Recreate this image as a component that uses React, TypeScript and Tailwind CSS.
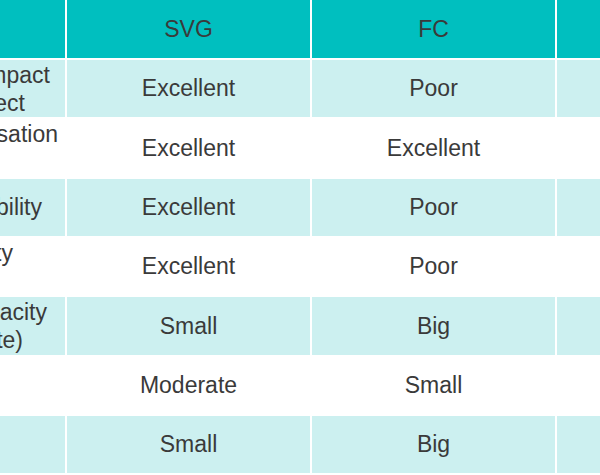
import React from "react";

type Line = { text: string; mr: number };
type Row = { first: Line[]; svg: string; fc: string };

const rows: Row[] = [
  { first: [{ text: "Visual Impact", mr: 15 }, { text: "Effect", mr: 40 }], svg: "Excellent", fc: "Poor" },
  { first: [{ text: "Customisation", mr: 7 }, { text: "", mr: 0 }], svg: "Excellent", fc: "Excellent" },
  { first: [{ text: "Scalability", mr: 23 }], svg: "Excellent", fc: "Poor" },
  { first: [{ text: "Quality", mr: 52 }, { text: "", mr: 0 }], svg: "Excellent", fc: "Poor" },
  { first: [{ text: "Storage capacity", mr: 18 }, { text: "(per site)", mr: 42 }], svg: "Small", fc: "Big" },
  { first: [], svg: "Moderate", fc: "Small" },
  { first: [], svg: "Small", fc: "Big" },
];

export default function App() {
  const font = { fontFamily: '"Liberation Sans", Arial, sans-serif' };
  return (
    <div className="w-[600px] h-[475px] bg-white overflow-hidden text-[#3a3a3a] text-[23px]" style={font}>
      <div className="grid grid-cols-[65px_243px_243px_1fr] grid-rows-[58px_repeat(7,57.33px)] gap-[2px]">
        <div className="bg-[#00bfbf]" />
        <div className="bg-[#00bfbf] flex items-center justify-center">SVG</div>
        <div className="bg-[#00bfbf] flex items-center justify-center">FC</div>
        <div className="bg-[#00bfbf]" />
        {rows.map((r, i) => {
          const bg = i % 2 === 0 ? "bg-[#ccf0f0]" : "bg-white";
          return (
            <React.Fragment key={i}>
              <div className={`${bg} overflow-hidden flex flex-col justify-center items-end leading-[28px]`}>
                {r.first.map((l, j) => (
                  <div key={j} className="whitespace-nowrap h-[28px]" style={{ marginRight: l.mr }}>
                    {l.text}
                  </div>
                ))}
              </div>
              <div className={`${bg} flex items-center justify-center`}>{r.svg}</div>
              <div className={`${bg} flex items-center justify-center`}>{r.fc}</div>
              <div className={bg} />
            </React.Fragment>
          );
        })}
      </div>
    </div>
  );
}
